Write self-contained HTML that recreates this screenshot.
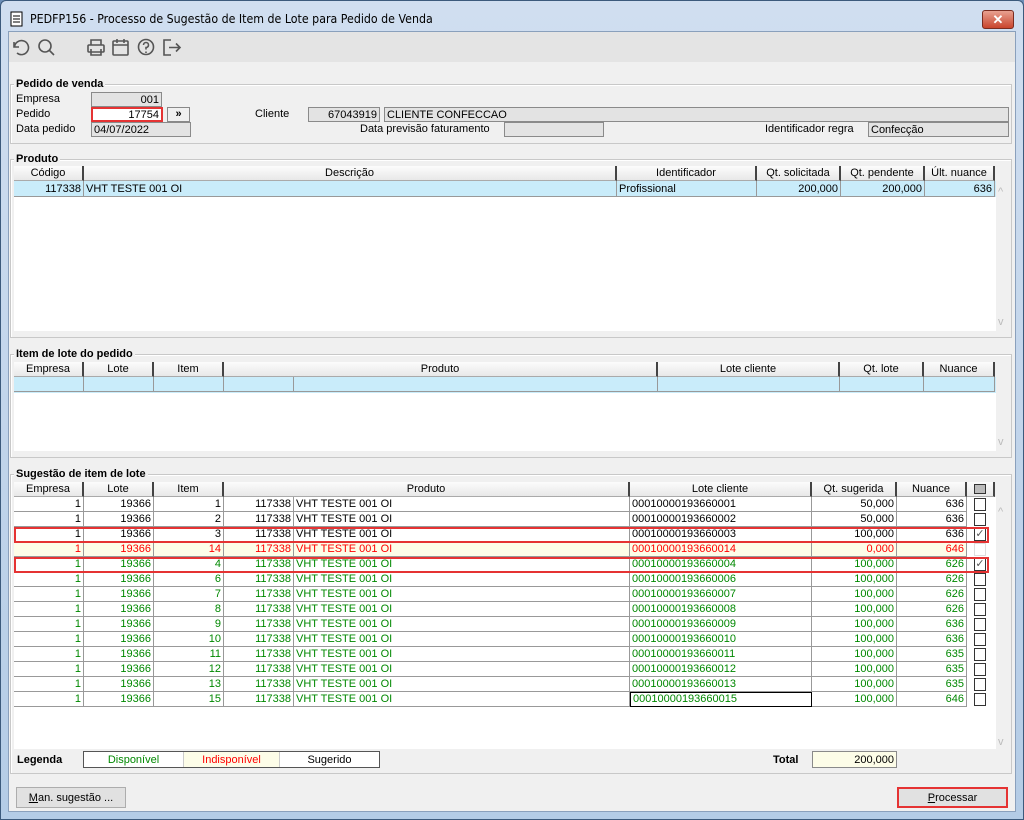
<!DOCTYPE html><html><head><style>
*{box-sizing:border-box;margin:0;padding:0}
body{width:1024px;height:820px;background:#6d8fb8;font-family:"Liberation Sans",sans-serif;font-size:11px;color:#000;position:relative;overflow:hidden}
.a{position:absolute}
.win{left:0;top:0;width:1024px;height:820px;background:linear-gradient(#d0def0,#b4cce6);border:1px solid #3c5a7c;border-radius:6px 6px 0 0}
.client{left:8px;top:31px;width:1008px;height:781px;background:#f0f0f0;border:1px solid #8aa0bc}
.grp{border:1px solid #c8c8c8;box-shadow:inset 1px 1px 0 #fff}
.gt{font-weight:bold;background:#f0f0f0;padding:0 2px;font-size:11px;line-height:12px}
.box{border:1px solid #8a8a8a;background:#e3e3e3;height:15px;line-height:14px;padding:0 2px;white-space:nowrap}
.hd{background:linear-gradient(#fcfcfc,#e8e8e8);border-right:2px solid #444;border-bottom:1px solid #aaa;text-align:center;line-height:15px;height:15px;overflow:hidden;white-space:nowrap}
.c{border-right:1px solid #999;border-bottom:1px solid #999;height:15px;line-height:15px;padding:0 2px;white-space:nowrap;overflow:hidden}
.r{text-align:right}
.cb{width:12px;height:13px;border:1px solid #333;background:#fff}
.btn{border:1px solid #adadad;background:#e1e1e1;text-align:center;line-height:19px}
</style></head><body>
<div class="a win"></div>
<svg class="a" style="left:10px;top:11px" width="14" height="16"><rect x="1" y="1" width="11" height="14" fill="#fff" stroke="#000"/><path d="M3 5h7M3 8h7M3 11h7" stroke="#000"/></svg>
<div class="a" style="left:30px;top:12px;font-size:12px;font-family:'DejaVu Sans',sans-serif;transform:scaleX(.92);transform-origin:left">PEDFP156 - Processo de Sugestão de Item de Lote para Pedido de Venda</div>
<div class="a" style="left:982px;top:10px;width:32px;height:19px;border:1px solid #7a2c20;border-radius:3px;background:linear-gradient(#e8a191,#c9452d);color:#fff;text-align:center;font-weight:bold;font-size:13px;line-height:17px">✕</div>
<div class="a client"></div>
<div class="a" style="left:9px;top:32px;width:1006px;height:30px;background:#e4e4e4"></div>
<svg class="a" style="left:10px;top:37px" width="180" height="22" fill="none" stroke="#555" stroke-width="1.6">
<path d="M4 5v5h5M4.5 10A7 7 0 1 1 7 16"/><circle cx="35" cy="9" r="6"/><path d="M39.5 13.5l4.5 4.5"/>
<rect x="78" y="8" width="16" height="7" rx="1"/><path d="M81 8V3h10v5M81 12v6h10v-6"/>
<rect x="103" y="4" width="15" height="14" rx="1"/><path d="M103 8h15M107 2v4M114 2v4"/>
<circle cx="136" cy="10" r="7.5"/><path d="M133.5 8a2.5 2.5 0 1 1 2.5 2.5v2M136 14.5v1.5"/>
<path d="M161 3h-7v15h7M159 10.5h11M166 6.5l4 4-4 4"/></svg>
<!-- Pedido de venda -->
<div class="a grp" style="left:10px;top:84px;width:1002px;height:60px"></div>
<div class="a gt" style="left:14px;top:78px">Pedido de venda</div>
<div class="a" style="left:16px;top:93px">Empresa</div>
<div class="a box r" style="left:91px;top:92px;width:71px">001</div>
<div class="a" style="left:16px;top:108px">Pedido</div>
<div class="a box r" style="left:91px;top:107px;width:72px;background:#fff;border:2px solid #e53333;line-height:12px">17754</div>
<div class="a btn" style="left:167px;top:107px;width:23px;height:15px;line-height:13px;font-weight:bold;background:#f0f0f0;border-color:#888">»</div>
<div class="a" style="left:16px;top:123px">Data pedido</div>
<div class="a box" style="left:91px;top:122px;width:100px">04/07/2022</div>
<div class="a" style="left:255px;top:108px">Cliente</div>
<div class="a box r" style="left:308px;top:107px;width:72px">67043919</div>
<div class="a box" style="left:384px;top:107px;width:625px">CLIENTE CONFECCAO</div>
<div class="a" style="left:360px;top:123px">Data previsão faturamento</div>
<div class="a box" style="left:504px;top:122px;width:100px"></div>
<div class="a" style="left:765px;top:123px">Identificador regra</div>
<div class="a box" style="left:868px;top:122px;width:141px">Confecção</div>
<!-- Produto -->
<div class="a grp" style="left:10px;top:159px;width:1002px;height:179px"></div>
<div class="a gt" style="left:14px;top:153px">Produto</div>
<div class="a" style="left:14px;top:181px;width:982px;height:150px;background:#fff"></div>
<div class="a hd" style="left:14px;top:166px;width:70px">Código</div>
<div class="a hd" style="left:84px;top:166px;width:533px">Descrição</div>
<div class="a hd" style="left:617px;top:166px;width:140px">Identificador</div>
<div class="a hd" style="left:757px;top:166px;width:84px">Qt. solicitada</div>
<div class="a hd" style="left:841px;top:166px;width:84px">Qt. pendente</div>
<div class="a hd" style="left:925px;top:166px;width:70px">Últ. nuance</div>
<div class="a" style="left:14px;top:181px;width:982px;height:16px;background:#c9ecfa"></div>
<div class="a c r" style="left:14px;top:181px;width:70px;height:16px;line-height:16px">117338</div>
<div class="a c" style="left:84px;top:181px;width:533px;height:16px;line-height:16px">VHT TESTE 001 OI</div>
<div class="a c" style="left:617px;top:181px;width:140px;height:16px;line-height:16px">Profissional</div>
<div class="a c r" style="left:757px;top:181px;width:84px;height:16px;line-height:16px">200,000</div>
<div class="a c r" style="left:841px;top:181px;width:84px;height:16px;line-height:16px">200,000</div>
<div class="a c r" style="left:925px;top:181px;width:70px;height:16px;line-height:16px">636</div>
<div class="a" style="left:998px;top:186px;color:#bbb">^</div><div class="a" style="left:998px;top:316px;color:#bbb">v</div>
<!-- Item de lote -->
<div class="a grp" style="left:10px;top:354px;width:1002px;height:104px"></div>
<div class="a gt" style="left:14px;top:348px">Item de lote do pedido</div>
<div class="a" style="left:14px;top:377px;width:982px;height:74px;background:#fff"></div>
<div class="a hd" style="left:14px;top:362px;width:70px">Empresa</div>
<div class="a hd" style="left:84px;top:362px;width:70px">Lote</div>
<div class="a hd" style="left:154px;top:362px;width:70px">Item</div>
<div class="a hd" style="left:224px;top:362px;width:434px">Produto</div>
<div class="a hd" style="left:658px;top:362px;width:182px">Lote cliente</div>
<div class="a hd" style="left:840px;top:362px;width:84px">Qt. lote</div>
<div class="a hd" style="left:924px;top:362px;width:71px">Nuance</div>
<div class="a" style="left:14px;top:377px;width:982px;height:16px;background:#c9ecfa"></div>
<div class="a c" style="left:14px;top:377px;width:70px"></div><div class="a c" style="left:84px;top:377px;width:70px"></div><div class="a c" style="left:154px;top:377px;width:70px"></div><div class="a c" style="left:224px;top:377px;width:70px"></div><div class="a c" style="left:294px;top:377px;width:364px"></div><div class="a c" style="left:658px;top:377px;width:182px"></div><div class="a c" style="left:840px;top:377px;width:84px"></div><div class="a c" style="left:924px;top:377px;width:71px"></div>
<div class="a" style="left:998px;top:436px;color:#bbb">v</div>
<!-- Sugestão -->
<div class="a grp" style="left:10px;top:474px;width:1002px;height:300px"></div>
<div class="a gt" style="left:14px;top:468px">Sugestão de item de lote</div>
<div class="a" style="left:14px;top:497px;width:982px;height:252px;background:#fff"></div>
<div class="a hd" style="left:14px;top:482px;width:70px">Empresa</div>
<div class="a hd" style="left:84px;top:482px;width:70px">Lote</div>
<div class="a hd" style="left:154px;top:482px;width:70px">Item</div>
<div class="a hd" style="left:224px;top:482px;width:406px">Produto</div>
<div class="a hd" style="left:630px;top:482px;width:182px">Lote cliente</div>
<div class="a hd" style="left:812px;top:482px;width:85px">Qt. sugerida</div>
<div class="a hd" style="left:897px;top:482px;width:70px">Nuance</div>
<div class="a hd" style="left:967px;top:482px;width:28px"><span style="display:inline-block;width:12px;height:10px;border:1px solid #333;background:#bbb;margin-top:2px"></span></div>
<div id="rows"></div>
<div class="a" style="left:998px;top:506px;color:#bbb">^</div><div class="a" style="left:998px;top:736px;color:#bbb">v</div>
<div class="a" style="left:14px;top:527px;width:975px;height:16px;border:2px solid #e53333"></div>
<div class="a" style="left:14px;top:557px;width:975px;height:16px;border:2px solid #e53333"></div>
<div class="a" style="left:17px;top:754px;font-weight:bold">Legenda</div>
<div class="a" style="left:83px;top:751px;width:297px;height:17px;border:1px solid #555;background:#fff"></div>
<div class="a" style="left:84px;top:752px;width:99px;height:15px;line-height:16px;text-align:center;color:#080">Disponível</div>
<div class="a" style="left:183px;top:752px;width:97px;height:15px;line-height:16px;text-align:center;color:#f00;background:#fdfde8;border-left:1px solid #ccc;border-right:1px solid #ccc">Indisponível</div>
<div class="a" style="left:280px;top:752px;width:99px;height:15px;line-height:16px;text-align:center">Sugerido</div>
<div class="a" style="left:773px;top:754px;font-weight:bold">Total</div>
<div class="a box r" style="left:812px;top:751px;width:85px;height:17px;background:#fdfde8;line-height:16px">200,000</div>
<div class="a btn" style="left:16px;top:787px;width:110px;height:21px;line-height:20px"><u>M</u>an. sugestão ...</div>
<div class="a btn" style="left:897px;top:787px;width:111px;height:21px;border:2px solid #e53333;line-height:18px"><u>P</u>rocessar</div>
<script>
var d=[[1,1,'0001',50,636,0,'#000'],[1,2,'0002',50,636,0,'#000'],[1,3,'0003',100,636,1,'#000'],[1,14,'0014',0,646,-1,'#f00'],[1,4,'0004',100,626,1,'#080'],[1,6,'0006',100,626,0,'#080'],[1,7,'0007',100,626,0,'#080'],[1,8,'0008',100,626,0,'#080'],[1,9,'0009',100,636,0,'#080'],[1,10,'0010',100,636,0,'#080'],[1,11,'0011',100,635,0,'#080'],[1,12,'0012',100,635,0,'#080'],[1,13,'0013',100,635,0,'#080'],[1,15,'0015',100,646,0,'#080']];
var h='';d.forEach(function(r,i){var y=497+i*15,bg=r[5]<0?'background:#fdfde8;':'';var s='top:'+y+'px;color:'+r[6]+';'+bg;
if(bg)h+='<div class="a" style="left:14px;top:'+y+'px;width:953px;height:15px;background:#fdfde8"></div>';
h+='<div class="a c r" style="left:14px;width:70px;'+s+'">1</div><div class="a c r" style="left:84px;width:70px;'+s+'">19366</div><div class="a c r" style="left:154px;width:70px;'+s+'">'+r[1]+'</div><div class="a c r" style="left:224px;width:70px;'+s+'">117338</div><div class="a c" style="left:294px;width:336px;'+s+'">VHT TESTE 001 OI</div><div class="a c" style="left:630px;width:182px;'+s+(i==13?'border:1px solid #000;line-height:13px;':'')+'">0001000019366'+r[2]+'</div><div class="a c r" style="left:812px;width:85px;'+s+'">'+r[3]+',000</div><div class="a c r" style="left:897px;width:70px;'+s+'">'+r[4]+'</div>';
if(r[5]>=0)h+='<div class="a cb" style="left:974px;top:'+(y+1)+'px;text-align:center;line-height:11px;color:#555">'+(r[5]?'✓':'')+'</div>';
else h+='<div class="a cb" style="left:974px;top:'+(y+1)+'px;border-color:#ddd"></div>';});
document.getElementById('rows').innerHTML=h;
</script>
</body></html>
